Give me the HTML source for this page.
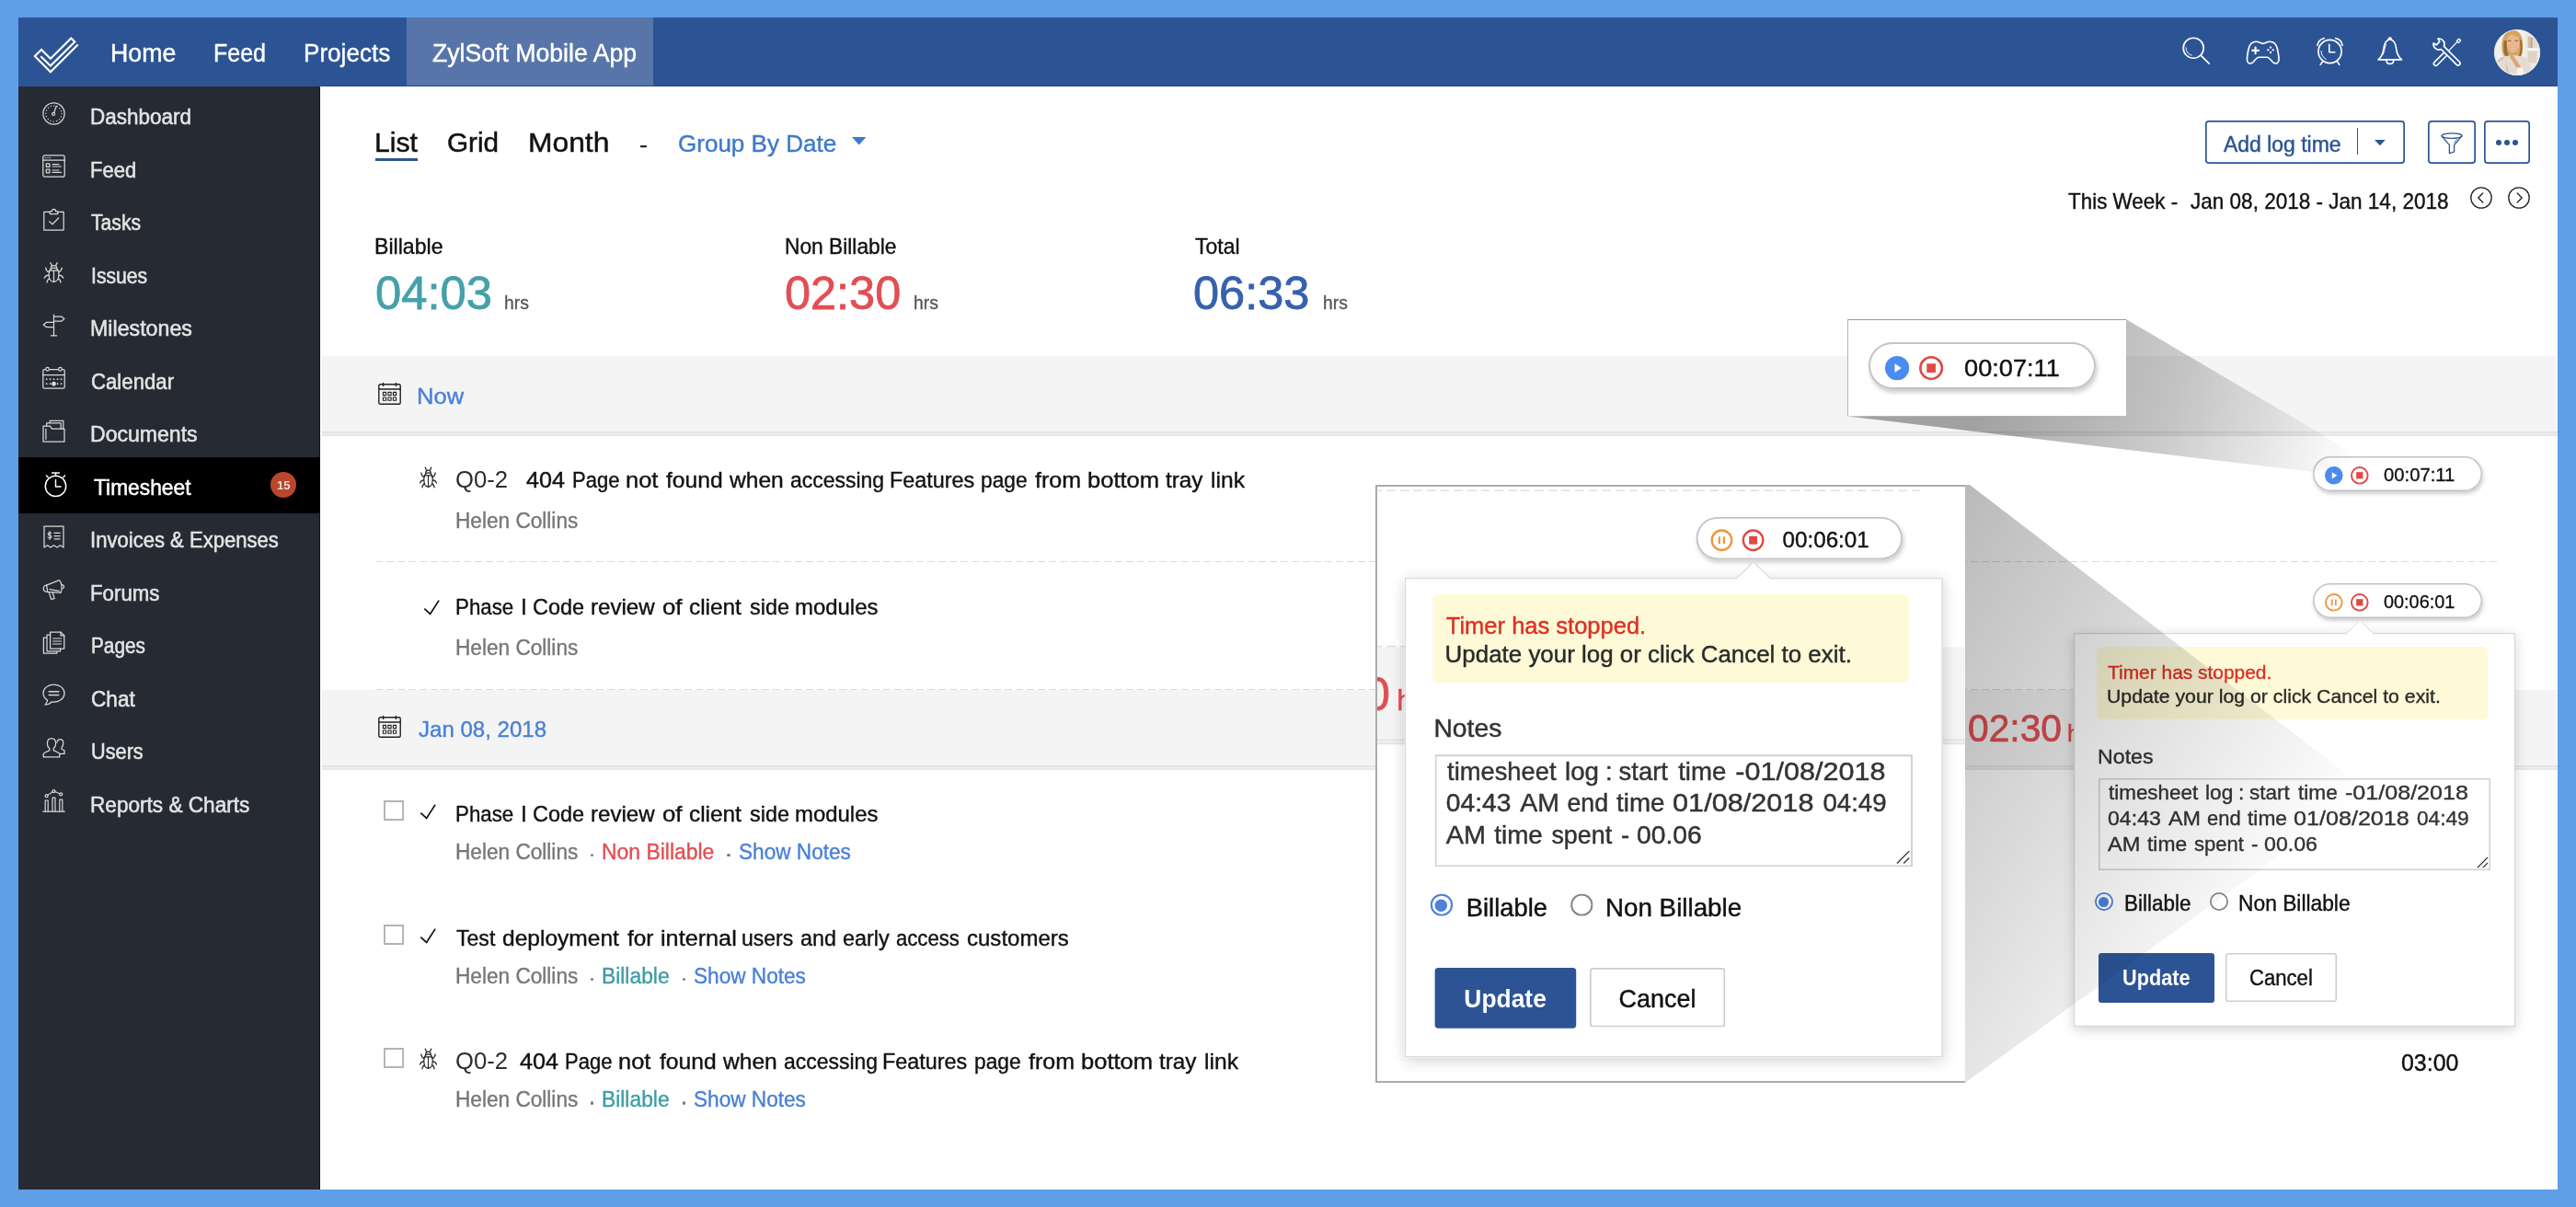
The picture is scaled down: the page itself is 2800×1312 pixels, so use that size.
<!DOCTYPE html><html><head><meta charset="utf-8"><title>Timesheet</title><style>
html,body{margin:0;padding:0}
body{width:2800px;height:1312px;position:relative;overflow:hidden;background:#5E9FE8;font-family:"Liberation Sans", sans-serif;}
.a{position:absolute;box-sizing:border-box}
.t{position:absolute;white-space:pre;line-height:1;transform-origin:0 50%;}
svg.a{overflow:visible}
</style></head><body><div class="a" style="left:20px;top:19px;width:2760px;height:1274px;background:#fff"></div><div class="a" style="left:348.2px;top:94px;width:2431.8px;height:1199px;background:#fff"></div><span class="t" style="left:406.84px;top:140.00px;font-size:29.4px;color:#111;-webkit-text-stroke:0.47px #111;transform:scaleX(1.0263);">List</span><div class="a" style="left:407.5px;top:171.8px;width:46.5px;height:3.2px;background:#2C5494"></div><span class="t" style="left:486.21px;top:140.00px;font-size:29.4px;color:#111;-webkit-text-stroke:0.47px #111;transform:scaleX(1.0112);">Grid</span><span class="t" style="left:574.12px;top:140.00px;font-size:29.4px;color:#111;-webkit-text-stroke:0.47px #111;transform:scaleX(1.0815);">Month</span><span class="t" style="left:695.38px;top:145.00px;font-size:24px;color:#222;-webkit-text-stroke:0.38px #222;transform:scaleX(1.0980);">-</span><span class="t" style="left:737.28px;top:143.00px;font-size:26px;color:#3F7ACD;-webkit-text-stroke:0.42px #3F7ACD;transform:scaleX(1.0012);">Group By Date</span><svg class="a" style="left:925.500px;top:148.800px" width="15.500" height="8.400" viewBox="0 0 15.500 8.400"><path d="M0 0h15.500L7.750 8.400z" fill="#3F7ACD"/></svg><div class="a" style="left:2396.9px;top:130.8px;width:217px;height:47.2px;box-shadow:inset 0 0 0 1.700px #2C5494;border-radius:4px;background:#fff"></div><span class="t" style="left:2417.40px;top:146.00px;font-size:23.5px;color:#2C5494;-webkit-text-stroke:0.45px #2C5494;transform:scaleX(0.9763);">Add log time</span><div class="a" style="left:2561.8px;top:139.2px;width:1.6px;height:29.3px;background:#2C5494"></div><svg class="a" style="left:2581px;top:151.600px" width="11.800" height="6.200" viewBox="0 0 11.800 6.200"><path d="M0 0h11.800L5.900 6.200z" fill="#2C5494"/></svg><div class="a" style="left:2638.9px;top:130.8px;width:52.2px;height:47.2px;box-shadow:inset 0 0 0 1.700px #2C5494;border-radius:4px;background:#fff"></div><svg class="a" style="left:2653.2px;top:143.5px" width="24" height="23.5" viewBox="0 0 24 23.5" fill="none" stroke="#2C5494" stroke-width="1.3" stroke-linecap="round" stroke-linejoin="round" ><ellipse cx="12" cy="3.600" rx="11" ry="2.800"/><path d="M1 3.800l8.400 9.800v9l5.200-1.600v-7.400L23 3.800" /><path d="M17.500 7.600l-3 3.600" stroke-width="0.900"/></svg><div class="a" style="left:2699.6px;top:130.8px;width:50.6px;height:47.2px;box-shadow:inset 0 0 0 1.700px #2C5494;border-radius:4px;background:#fff"></div><div class="a" style="left:2713.3px;top:152.2px;width:5.8px;height:5.8px;border-radius:50%;background:#2C5494"></div><div class="a" style="left:2722.1000000000004px;top:152.2px;width:5.8px;height:5.8px;border-radius:50%;background:#2C5494"></div><div class="a" style="left:2730.9px;top:152.2px;width:5.8px;height:5.8px;border-radius:50%;background:#2C5494"></div><span class="t" style="left:2248.25px;top:208.00px;font-size:23.2px;color:#111;-webkit-text-stroke:0.37px #111;transform:scaleX(0.9670);">This Week -</span><span class="t" style="left:2380.95px;top:208.00px;font-size:23.2px;color:#111;-webkit-text-stroke:0.37px #111;transform:scaleX(0.9714);">Jan 08, 2018 - Jan 14, 2018</span><svg class="a" style="left:2685px;top:203px" width="24" height="24" viewBox="0 0 24 24" fill="none" stroke="#222" stroke-width="1.3" stroke-linecap="round" stroke-linejoin="round" ><circle cx="12" cy="12" r="11.200"/><path d="M13.800 7l-5 5 5 5"/></svg><svg class="a" style="left:2726px;top:203px" width="24" height="24" viewBox="0 0 24 24" fill="none" stroke="#222" stroke-width="1.3" stroke-linecap="round" stroke-linejoin="round" ><circle cx="12" cy="12" r="11.200"/><path d="M10.200 7l5 5-5 5"/></svg><span class="t" style="left:407.39px;top:257.00px;font-size:23.7px;color:#111;-webkit-text-stroke:0.38px #111;transform:scaleX(0.9755);">Billable</span><span class="t" style="left:853.12px;top:257.00px;font-size:23.7px;color:#111;-webkit-text-stroke:0.38px #111;transform:scaleX(0.9607);">Non Billable</span><span class="t" style="left:1298.64px;top:257.00px;font-size:23.7px;color:#111;-webkit-text-stroke:0.38px #111;transform:scaleX(0.9703);">Total</span><span class="t" style="left:407.81px;top:294.00px;font-size:50.7px;color:#45A0AA;-webkit-text-stroke:0.81px #45A0AA;transform:scaleX(1.0013);">04:03</span><span class="t" style="left:853.32px;top:294.00px;font-size:50.7px;color:#E04F54;-webkit-text-stroke:0.81px #E04F54;transform:scaleX(0.9949);">02:30</span><span class="t" style="left:1297.42px;top:294.00px;font-size:50.7px;color:#3561AE;-webkit-text-stroke:0.81px #3561AE;transform:scaleX(0.9957);">06:33</span><span class="t" style="left:548.29px;top:319.00px;font-size:20px;color:#555;-webkit-text-stroke:0.32px #555;transform:scaleX(0.9688);">hrs</span><span class="t" style="left:993.39px;top:319.00px;font-size:20px;color:#555;-webkit-text-stroke:0.32px #555;transform:scaleX(0.9688);">hrs</span><span class="t" style="left:1438.39px;top:319.00px;font-size:20px;color:#555;-webkit-text-stroke:0.32px #555;transform:scaleX(0.9688);">hrs</span><div class="a" style="left:350px;top:387px;width:2430px;height:82px;background:#F4F4F4"></div><div class="a" style="left:350px;top:469px;width:2430px;height:2px;background:#E4E4E4"></div><div class="a" style="left:350px;top:471px;width:2430px;height:1.2px;background:#F1F1F1"></div><div class="a" style="left:350px;top:472.2px;width:2430px;height:1.8px;background:#E7E7E7"></div><svg class="a" style="left:411px;top:415px" width="25" height="25" viewBox="0 0 25 25" fill="none" stroke="#222" stroke-width="1.4" stroke-linecap="round" stroke-linejoin="round" ><rect x="0.800" y="2.800" width="23.400" height="21.400" rx="1.500"/><path d="M0.800 8h23.400M5.600 1.400v3M19.400 1.400v3"/><g stroke-width="1.100"><rect x="5.400" y="11.400" width="3.200" height="3.200"/><rect x="10.900" y="11.400" width="3.200" height="3.200"/><rect x="16.400" y="11.400" width="3.200" height="3.200"/><rect x="5.400" y="17" width="3.200" height="3.200"/><rect x="10.900" y="17" width="3.200" height="3.200"/><rect x="16.400" y="17" width="3.200" height="3.200"/></g></svg><span class="t" style="left:452.91px;top:419.00px;font-size:24.7px;color:#4A80D6;-webkit-text-stroke:0.4px #4A80D6;transform:scaleX(1.0338);">Now</span><svg class="a" style="left:454.7px;top:506.6px" width="21" height="23.6" viewBox="0.500 1.500 24 23.200" fill="none" stroke="#222" stroke-width="1.3" stroke-linecap="round" stroke-linejoin="round" preserveAspectRatio="none"><path d="M12.500 8.200c-3.600 0-5.400 3-5.400 7.400 0 4.600 2.200 7.800 5.400 7.800s5.400-3.200 5.400-7.800c0-4.400-1.800-7.400-5.400-7.400z"/><path d="M12.500 11v12.200M7.600 11.200h9.800"/><path d="M9.200 8.600c0-4 6.600-4 6.600 0"/><path d="M10.200 5.400L8.800 2.600M14.800 5.400l1.400-2.800"/><path d="M7.300 12.800c-2.200-.6-3.200-2.200-3.600-4.600M17.700 12.800c2.200-.6 3.200-2.200 3.600-4.600M7 16.200c-2.400 0-3.800.8-4.800 3M18 16.200c2.400 0 3.800.8 4.800 3M7.800 20.200c-1.800.4-2.600 1.800-2.800 3.800M17.200 20.200c1.800.4 2.600 1.800 2.800 3.800"/></svg><span class="t" style="left:494.70px;top:509.00px;font-size:25px;color:#2e2e2e;transform:scaleX(1.0263);">Q0-2</span><span class="t" style="left:572.01px;top:510.00px;font-size:24.5px;color:#111;-webkit-text-stroke:0.39px #111;transform:scaleX(1.0280);">404</span><span class="t" style="left:621.58px;top:510.00px;font-size:24.5px;color:#111;-webkit-text-stroke:0.39px #111;transform:scaleX(0.8985);">Page</span><span class="t" style="left:679.51px;top:510.00px;font-size:24.5px;color:#111;-webkit-text-stroke:0.39px #111;transform:scaleX(1.0395);">not</span><span class="t" style="left:723.60px;top:510.00px;font-size:24.5px;color:#111;-webkit-text-stroke:0.39px #111;transform:scaleX(1.0061);">found</span><span class="t" style="left:793.28px;top:510.00px;font-size:24.5px;color:#111;-webkit-text-stroke:0.39px #111;transform:scaleX(1.0039);">when</span><span class="t" style="left:858.68px;top:510.00px;font-size:24.5px;color:#111;-webkit-text-stroke:0.39px #111;transform:scaleX(0.9363);">accessing</span><span class="t" style="left:966.57px;top:510.00px;font-size:24.5px;color:#111;-webkit-text-stroke:0.39px #111;transform:scaleX(0.9542);">Features</span><span class="t" style="left:1065.98px;top:510.00px;font-size:24.5px;color:#111;-webkit-text-stroke:0.39px #111;transform:scaleX(0.9273);">page</span><span class="t" style="left:1125.20px;top:510.00px;font-size:24.5px;color:#111;-webkit-text-stroke:0.39px #111;transform:scaleX(1.0224);">from</span><span class="t" style="left:1181.70px;top:510.00px;font-size:24.5px;color:#111;-webkit-text-stroke:0.39px #111;transform:scaleX(1.0430);">bottom</span><span class="t" style="left:1267.10px;top:510.00px;font-size:24.5px;color:#111;-webkit-text-stroke:0.39px #111;transform:scaleX(0.9892);">tray</span><span class="t" style="left:1315.86px;top:510.00px;font-size:24.5px;color:#111;-webkit-text-stroke:0.39px #111;transform:scaleX(1.0052);">link</span><span class="t" style="left:495.23px;top:555.00px;font-size:23.5px;color:#777;-webkit-text-stroke:0.38px #777;transform:scaleX(0.9626);">Helen Collins</span><div class="a" style="left:407.7px;top:609.95px;width:2307.0px;height:1.5px;background:repeating-linear-gradient(90deg,#DADADA 0 8px,transparent 8px 12px)"></div><svg class="a" style="left:461px;top:652.4px" width="18" height="17" viewBox="0 0 18 17" fill="none" stroke="#111" stroke-width="1.7" stroke-linecap="round" stroke-linejoin="round" ><path d="M0.300 9.700L6.600 15.500L16.100 0.600" stroke-linecap="butt" stroke-linejoin="miter"/></svg><span class="t" style="left:494.96px;top:648.00px;font-size:24.5px;color:#111;-webkit-text-stroke:0.39px #111;transform:scaleX(0.9104);">Phase</span><span class="t" style="left:565.69px;top:648.00px;font-size:24.5px;color:#111;-webkit-text-stroke:0.39px #111;transform:scaleX(1.0010);">I</span><span class="t" style="left:578.90px;top:648.00px;font-size:24.5px;color:#111;-webkit-text-stroke:0.39px #111;transform:scaleX(0.9570);">Code</span><span class="t" style="left:642.09px;top:648.00px;font-size:24.5px;color:#111;-webkit-text-stroke:0.39px #111;transform:scaleX(0.9833);">review</span><span class="t" style="left:720.49px;top:648.00px;font-size:24.5px;color:#111;-webkit-text-stroke:0.39px #111;transform:scaleX(1.0531);">of</span><span class="t" style="left:749.44px;top:648.00px;font-size:24.5px;color:#111;-webkit-text-stroke:0.39px #111;transform:scaleX(0.9945);">client</span><span class="t" style="left:815.03px;top:648.00px;font-size:24.5px;color:#111;-webkit-text-stroke:0.39px #111;transform:scaleX(0.9548);">side</span><span class="t" style="left:864.20px;top:648.00px;font-size:24.5px;color:#111;-webkit-text-stroke:0.39px #111;transform:scaleX(0.9767);">modules</span><span class="t" style="left:495.23px;top:693.00px;font-size:23.5px;color:#777;-webkit-text-stroke:0.38px #777;transform:scaleX(0.9626);">Helen Collins</span><div class="a" style="left:407.7px;top:748.55px;width:2307.0px;height:1.5px;background:repeating-linear-gradient(90deg,#DADADA 0 8px,transparent 8px 12px)"></div><div class="a" style="left:350px;top:750px;width:2430px;height:82px;background:#F4F4F4"></div><div class="a" style="left:350px;top:832px;width:2430px;height:2px;background:#E4E4E4"></div><div class="a" style="left:350px;top:834px;width:2430px;height:1.2px;background:#F1F1F1"></div><div class="a" style="left:350px;top:835.2px;width:2430px;height:1.8px;background:#E7E7E7"></div><svg class="a" style="left:411px;top:776.5px" width="25" height="25" viewBox="0 0 25 25" fill="none" stroke="#222" stroke-width="1.4" stroke-linecap="round" stroke-linejoin="round" ><rect x="0.800" y="2.800" width="23.400" height="21.400" rx="1.500"/><path d="M0.800 8h23.400M5.600 1.400v3M19.400 1.400v3"/><g stroke-width="1.100"><rect x="5.400" y="11.400" width="3.200" height="3.200"/><rect x="10.900" y="11.400" width="3.200" height="3.200"/><rect x="16.400" y="11.400" width="3.200" height="3.200"/><rect x="5.400" y="17" width="3.200" height="3.200"/><rect x="10.900" y="17" width="3.200" height="3.200"/><rect x="16.400" y="17" width="3.200" height="3.200"/></g></svg><span class="t" style="left:454.52px;top:781.00px;font-size:24.7px;color:#4A80D6;-webkit-text-stroke:0.4px #4A80D6;transform:scaleX(0.9742);">Jan 08, 2018</span><div class="a" style="left:417.2px;top:870.0999999999999px;width:21.8px;height:21.8px;box-shadow:inset 0 0 0 1.900px #B3B3B3;background:#fff"></div><svg class="a" style="left:456.8px;top:874.4px" width="18" height="17" viewBox="0 0 18 17" fill="none" stroke="#111" stroke-width="1.7" stroke-linecap="round" stroke-linejoin="round" ><path d="M0.300 9.700L6.600 15.500L16.100 0.600" stroke-linecap="butt" stroke-linejoin="miter"/></svg><span class="t" style="left:494.96px;top:873.00px;font-size:24.5px;color:#111;-webkit-text-stroke:0.39px #111;transform:scaleX(0.9104);">Phase</span><span class="t" style="left:565.69px;top:873.00px;font-size:24.5px;color:#111;-webkit-text-stroke:0.39px #111;transform:scaleX(1.0010);">I</span><span class="t" style="left:578.90px;top:873.00px;font-size:24.5px;color:#111;-webkit-text-stroke:0.39px #111;transform:scaleX(0.9570);">Code</span><span class="t" style="left:642.09px;top:873.00px;font-size:24.5px;color:#111;-webkit-text-stroke:0.39px #111;transform:scaleX(0.9833);">review</span><span class="t" style="left:720.49px;top:873.00px;font-size:24.5px;color:#111;-webkit-text-stroke:0.39px #111;transform:scaleX(1.0531);">of</span><span class="t" style="left:749.44px;top:873.00px;font-size:24.5px;color:#111;-webkit-text-stroke:0.39px #111;transform:scaleX(0.9945);">client</span><span class="t" style="left:815.03px;top:873.00px;font-size:24.5px;color:#111;-webkit-text-stroke:0.39px #111;transform:scaleX(0.9548);">side</span><span class="t" style="left:864.20px;top:873.00px;font-size:24.5px;color:#111;-webkit-text-stroke:0.39px #111;transform:scaleX(0.9767);">modules</span><span class="t" style="left:495.23px;top:915.00px;font-size:23.5px;color:#777;-webkit-text-stroke:0.38px #777;transform:scaleX(0.9626);">Helen Collins</span><div class="a" style="left:642.2px;top:928.2px;width:3.3px;height:3.3px;border-radius:50%;background:#7a7a7a"></div><span class="t" style="left:654.01px;top:915.00px;font-size:23.5px;color:#E04F54;-webkit-text-stroke:0.38px #E04F54;transform:scaleX(0.9754);">Non Billable</span><div class="a" style="left:790.4px;top:928.2px;width:3.3px;height:3.3px;border-radius:50%;background:#7a7a7a"></div><span class="t" style="left:803.29px;top:915.00px;font-size:23.5px;color:#4A80D6;-webkit-text-stroke:0.38px #4A80D6;transform:scaleX(0.9622);">Show Notes</span><div class="a" style="left:417.2px;top:1004.8999999999999px;width:21.8px;height:21.8px;box-shadow:inset 0 0 0 1.900px #B3B3B3;background:#fff"></div><svg class="a" style="left:456.8px;top:1009.1999999999999px" width="18" height="17" viewBox="0 0 18 17" fill="none" stroke="#111" stroke-width="1.7" stroke-linecap="round" stroke-linejoin="round" ><path d="M0.300 9.700L6.600 15.500L16.100 0.600" stroke-linecap="butt" stroke-linejoin="miter"/></svg><span class="t" style="left:495.74px;top:1008.00px;font-size:24.5px;color:#111;-webkit-text-stroke:0.39px #111;transform:scaleX(0.9410);">Test</span><span class="t" style="left:545.93px;top:1008.00px;font-size:24.5px;color:#111;-webkit-text-stroke:0.39px #111;transform:scaleX(1.0017);">deployment</span><span class="t" style="left:681.80px;top:1008.00px;font-size:24.5px;color:#111;-webkit-text-stroke:0.39px #111;transform:scaleX(0.9940);">for</span><span class="t" style="left:717.52px;top:1008.00px;font-size:24.5px;color:#111;-webkit-text-stroke:0.39px #111;transform:scaleX(1.0297);">internal</span><span class="t" style="left:806.16px;top:1008.00px;font-size:24.5px;color:#111;-webkit-text-stroke:0.39px #111;transform:scaleX(0.9390);">users</span><span class="t" style="left:869.67px;top:1008.00px;font-size:24.5px;color:#111;-webkit-text-stroke:0.39px #111;transform:scaleX(0.9526);">and</span><span class="t" style="left:915.57px;top:1008.00px;font-size:24.5px;color:#111;-webkit-text-stroke:0.39px #111;transform:scaleX(0.9553);">early</span><span class="t" style="left:974.31px;top:1008.00px;font-size:24.5px;color:#111;-webkit-text-stroke:0.39px #111;transform:scaleX(0.9020);">access</span><span class="t" style="left:1050.65px;top:1008.00px;font-size:24.5px;color:#111;-webkit-text-stroke:0.39px #111;transform:scaleX(0.9805);">customers</span><span class="t" style="left:495.23px;top:1050.00px;font-size:23.5px;color:#777;-webkit-text-stroke:0.38px #777;transform:scaleX(0.9626);">Helen Collins</span><div class="a" style="left:642.2px;top:1063.0px;width:3.3px;height:3.3px;border-radius:50%;background:#7a7a7a"></div><span class="t" style="left:654.02px;top:1050.00px;font-size:23.5px;color:#3F9CA6;-webkit-text-stroke:0.38px #3F9CA6;transform:scaleX(0.9715);">Billable</span><div class="a" style="left:741.5px;top:1063.0px;width:3.3px;height:3.3px;border-radius:50%;background:#7a7a7a"></div><span class="t" style="left:754.49px;top:1050.00px;font-size:23.5px;color:#4A80D6;-webkit-text-stroke:0.38px #4A80D6;transform:scaleX(0.9622);">Show Notes</span><div class="a" style="left:417.2px;top:1139.3px;width:21.8px;height:21.8px;box-shadow:inset 0 0 0 1.900px #B3B3B3;background:#fff"></div><svg class="a" style="left:454.7px;top:1139px" width="21" height="23.6" viewBox="0.500 1.500 24 23.200" fill="none" stroke="#222" stroke-width="1.3" stroke-linecap="round" stroke-linejoin="round" preserveAspectRatio="none"><path d="M12.500 8.200c-3.600 0-5.400 3-5.400 7.400 0 4.600 2.200 7.800 5.400 7.800s5.400-3.200 5.400-7.800c0-4.400-1.800-7.400-5.400-7.400z"/><path d="M12.500 11v12.200M7.600 11.200h9.800"/><path d="M9.200 8.600c0-4 6.600-4 6.600 0"/><path d="M10.200 5.400L8.800 2.600M14.800 5.400l1.400-2.800"/><path d="M7.300 12.800c-2.200-.6-3.200-2.200-3.600-4.600M17.700 12.800c2.200-.6 3.200-2.200 3.600-4.600M7 16.200c-2.400 0-3.800.8-4.800 3M18 16.200c2.400 0 3.800.8 4.800 3M7.800 20.200c-1.800.4-2.600 1.800-2.800 3.800M17.200 20.200c1.800.4 2.600 1.800 2.800 3.800"/></svg><span class="t" style="left:494.70px;top:1141.00px;font-size:25px;color:#2e2e2e;transform:scaleX(1.0263);">Q0-2</span><span class="t" style="left:564.91px;top:1142.00px;font-size:24.5px;color:#111;-webkit-text-stroke:0.39px #111;transform:scaleX(1.0280);">404</span><span class="t" style="left:614.48px;top:1142.00px;font-size:24.5px;color:#111;-webkit-text-stroke:0.39px #111;transform:scaleX(0.8985);">Page</span><span class="t" style="left:672.41px;top:1142.00px;font-size:24.5px;color:#111;-webkit-text-stroke:0.39px #111;transform:scaleX(1.0395);">not</span><span class="t" style="left:716.50px;top:1142.00px;font-size:24.5px;color:#111;-webkit-text-stroke:0.39px #111;transform:scaleX(1.0061);">found</span><span class="t" style="left:786.18px;top:1142.00px;font-size:24.5px;color:#111;-webkit-text-stroke:0.39px #111;transform:scaleX(1.0039);">when</span><span class="t" style="left:851.58px;top:1142.00px;font-size:24.5px;color:#111;-webkit-text-stroke:0.39px #111;transform:scaleX(0.9363);">accessing</span><span class="t" style="left:959.47px;top:1142.00px;font-size:24.5px;color:#111;-webkit-text-stroke:0.39px #111;transform:scaleX(0.9542);">Features</span><span class="t" style="left:1058.88px;top:1142.00px;font-size:24.5px;color:#111;-webkit-text-stroke:0.39px #111;transform:scaleX(0.9273);">page</span><span class="t" style="left:1118.10px;top:1142.00px;font-size:24.5px;color:#111;-webkit-text-stroke:0.39px #111;transform:scaleX(1.0224);">from</span><span class="t" style="left:1174.60px;top:1142.00px;font-size:24.5px;color:#111;-webkit-text-stroke:0.39px #111;transform:scaleX(1.0430);">bottom</span><span class="t" style="left:1260.00px;top:1142.00px;font-size:24.5px;color:#111;-webkit-text-stroke:0.39px #111;transform:scaleX(0.9892);">tray</span><span class="t" style="left:1308.76px;top:1142.00px;font-size:24.5px;color:#111;-webkit-text-stroke:0.39px #111;transform:scaleX(1.0052);">link</span><span class="t" style="left:495.23px;top:1184.00px;font-size:23.5px;color:#777;-webkit-text-stroke:0.38px #777;transform:scaleX(0.9626);">Helen Collins</span><div class="a" style="left:642.2px;top:1197.4px;width:3.3px;height:3.3px;border-radius:50%;background:#7a7a7a"></div><span class="t" style="left:654.02px;top:1184.00px;font-size:23.5px;color:#3F9CA6;-webkit-text-stroke:0.38px #3F9CA6;transform:scaleX(0.9715);">Billable</span><div class="a" style="left:741.5px;top:1197.4px;width:3.3px;height:3.3px;border-radius:50%;background:#7a7a7a"></div><span class="t" style="left:754.49px;top:1184.00px;font-size:23.5px;color:#4A80D6;-webkit-text-stroke:0.38px #4A80D6;transform:scaleX(0.9622);">Show Notes</span><span class="t" style="left:2610.12px;top:1143.00px;font-size:25.6px;color:#111;-webkit-text-stroke:0.41px #111;transform:scaleX(0.9741);">03:00</span><div class="a" style="left:20px;top:94px;width:328.2px;height:1199px;background:#262A33"></div><div class="a" style="left:346.6px;top:94.5px;width:1.6px;height:1198.5px;background:linear-gradient(90deg,#1b1f27,#0e1116)"></div><div class="a" style="left:20px;top:497px;width:328.2px;height:61px;background:#000"></div><svg class="a" style="left:46px;top:110.7px" width="25" height="25" viewBox="0 0 25 25" fill="none" stroke="#d8d8d8" stroke-width="1.25" stroke-linecap="round" stroke-linejoin="round" ><circle cx="12.5" cy="12.5" r="11.6"/><circle cx="12.1" cy="12.900" r="1.500"/><path d="M12.700 11.500L15.300 4.200"/><circle cx="12.500" cy="12.500" r="8.600" stroke-width="1.300" stroke-dasharray="0.100 3.300" stroke-dashoffset="-27.200" pathLength="54"/></svg><span class="t" style="left:98.44px;top:115.00px;font-size:24.5px;color:#E4E4E4;-webkit-text-stroke:0.55px #E4E4E4;transform:scaleX(0.9179);">Dashboard</span><svg class="a" style="left:46px;top:168.20000000000002px" width="25" height="25" viewBox="0 0 25 25" fill="none" stroke="#d8d8d8" stroke-width="1.25" stroke-linecap="round" stroke-linejoin="round" ><rect x="0.8" y="0.8" width="23.4" height="23.4" rx="2"/><path d="M0.8 6.2h23.4"/><path d="M3.6 3.6h.1M6 3.6h.1M8.4 3.6h.1" stroke-width="1.4"/><rect x="4.3" y="9.8" width="3.6" height="3.6"/><rect x="4.3" y="16.2" width="3.6" height="3.6"/><path d="M11 10.6h7M11 13h9.5M11 17h7M11 19.4h9.5" stroke-width="1.1"/></svg><span class="t" style="left:98.48px;top:173.00px;font-size:24.5px;color:#E4E4E4;-webkit-text-stroke:0.55px #E4E4E4;transform:scaleX(0.8981);">Feed</span><svg class="a" style="left:46px;top:225.70000000000002px" width="25" height="25" viewBox="0 0 25 25" fill="none" stroke="#d8d8d8" stroke-width="1.25" stroke-linecap="round" stroke-linejoin="round" ><path d="M8.2 4.3H1.8V24h21.4V4.3h-6.4"/><path d="M8.2 6.6V3.8h2.2c0-3.2 4.2-3.2 4.2 0h2.2v2.8z"/><path d="M7.5 14.6l3.4 3.2 6.8-6.8"/></svg><span class="t" style="left:98.77px;top:230.00px;font-size:24.5px;color:#E4E4E4;-webkit-text-stroke:0.55px #E4E4E4;transform:scaleX(0.8637);">Tasks</span><svg class="a" style="left:46px;top:283.2px" width="25" height="25" viewBox="0 0 25 25" fill="none" stroke="#d8d8d8" stroke-width="1.25" stroke-linecap="round" stroke-linejoin="round" ><path d="M12.500 8.200c-3.600 0-5.400 3-5.400 7.400 0 4.600 2.200 7.800 5.400 7.800s5.400-3.200 5.400-7.800c0-4.400-1.800-7.400-5.400-7.400z"/><path d="M12.500 11v12.200M7.600 11.200h9.800"/><path d="M9.200 8.600c0-4 6.600-4 6.600 0"/><path d="M10.200 5.400L8.800 2.600M14.800 5.400l1.400-2.800"/><path d="M7.300 12.800c-2.200-.6-3.200-2.200-3.600-4.600M17.700 12.800c2.200-.6 3.200-2.200 3.600-4.600M7 16.200c-2.400 0-3.800.8-4.800 3M18 16.200c2.400 0 3.800.8 4.800 3M7.800 20.200c-1.800.4-2.600 1.800-2.800 3.800M17.200 20.200c1.800.4 2.600 1.800 2.800 3.800"/></svg><span class="t" style="left:98.55px;top:288.00px;font-size:24.5px;color:#E4E4E4;-webkit-text-stroke:0.55px #E4E4E4;transform:scaleX(0.8631);">Issues</span><svg class="a" style="left:46px;top:340.7px" width="25" height="25" viewBox="0 0 25 25" fill="none" stroke="#d8d8d8" stroke-width="1.25" stroke-linecap="round" stroke-linejoin="round" ><path d="M12.500 1v22.400M9.400 23.800h6.200"/><path d="M12.500 3h8.200l3.200 2.600-3.200 2.600h-8.200"/><path d="M12.500 9.400H4.400L1.200 12l3.200 2.600h8.100"/></svg><span class="t" style="left:98.39px;top:345.00px;font-size:24.5px;color:#E4E4E4;-webkit-text-stroke:0.55px #E4E4E4;transform:scaleX(0.9473);">Milestones</span><svg class="a" style="left:46px;top:398.2px" width="25" height="25" viewBox="0 0 25 25" fill="none" stroke="#d8d8d8" stroke-width="1.25" stroke-linecap="round" stroke-linejoin="round" ><rect x="0.8" y="3.600" width="23.400" height="20.600" rx="1.500"/><path d="M0.800 9.600h23.400"/><circle cx="5.600" cy="3.200" r="1.800" fill="#262A33"/><circle cx="19.400" cy="3.200" r="1.800" fill="#262A33"/><path d="M4.600 14.200h.1M8.500 14.200h.1M12.500 14.200h.1M16.500 14.200h.1M20.400 14.200h.1M4.600 19.200h.1M8.500 19.200h.1M16.500 19.200h.1M20.400 19.200h.1" stroke-width="1.700"/><circle cx="12.500" cy="19.200" r="1.800" fill="#ddd"/></svg><span class="t" style="left:98.56px;top:403.00px;font-size:24.5px;color:#E4E4E4;-webkit-text-stroke:0.55px #E4E4E4;transform:scaleX(0.9057);">Calendar</span><svg class="a" style="left:46px;top:455.7px" width="25" height="25" viewBox="0 0 25 25" fill="none" stroke="#d8d8d8" stroke-width="1.25" stroke-linecap="round" stroke-linejoin="round" ><path d="M1 7.200h7.400l2 3H24v14H1z"/><path d="M3.900 10.400v11"/><path d="M4.600 7V3.800h15.600v6.200M8.200 3.600V1.400h14.600v8.800"/></svg><span class="t" style="left:98.40px;top:460.00px;font-size:24.5px;color:#E4E4E4;-webkit-text-stroke:0.55px #E4E4E4;transform:scaleX(0.9412);">Documents</span><svg class="a" style="left:48px;top:512.4px" width="25" height="27" viewBox="0 -1 25 27" fill="none" stroke="#fff" stroke-width="1.5" stroke-linecap="round" stroke-linejoin="round" ><circle cx="12.500" cy="15.400" r="11.200"/><path d="M12.500 4V1.200M8.600 1h7.800M20.800 5.800l1.800-1.800M4.200 5.800L2.400 4"/><path d="M12.500 8.600v7.400h5.600"/></svg><span class="t" style="left:101.64px;top:518.00px;font-size:24.5px;color:#fff;-webkit-text-stroke:0.55px #fff;transform:scaleX(0.9296);">Timesheet</span><svg class="a" style="left:46px;top:570.6999999999999px" width="25" height="25" viewBox="0 0 25 25" fill="none" stroke="#d8d8d8" stroke-width="1.25" stroke-linecap="round" stroke-linejoin="round" ><path d="M2 1h21v23l-3.5-2.2L16 24l-3.5-2.2L9 24l-3.5-2.2L2 24z"/><path d="M13 8.4h6.2M13 11.6h6.2M13 14.8h6.2" stroke-width="1.2"/><path d="M9.6 8.6c-1-1.2-3.4-.8-3.4.8 0 2 3.6 1 3.6 3 0 1.800-2.800 2-3.800.600M8 6.600v8.800" stroke-width="1.1"/></svg><span class="t" style="left:98.48px;top:575.00px;font-size:24.5px;color:#E4E4E4;-webkit-text-stroke:0.55px #E4E4E4;transform:scaleX(0.9010);">Invoices &amp; Expenses</span><svg class="a" style="left:46px;top:628.1999999999999px" width="25" height="25" viewBox="0 0 25 25" fill="none" stroke="#d8d8d8" stroke-width="1.25" stroke-linecap="round" stroke-linejoin="round" ><path d="M4.600 8.200L18.400 2.600c2.800 2.400 3.600 9 1.600 13.800L5.800 15.400z"/><path d="M4.600 8.200C2.200 8.400 1 9.800 1.200 12c.2 2.200 1.800 3.400 4.600 3.400"/><path d="M7.200 15.600l2.400 7.800 3.600-.8-2-6.400M21.600 7.600c2.200.2 2.800 3.200.6 4.200M7.800 12.600l10.400 1.800" /></svg><span class="t" style="left:98.46px;top:633.00px;font-size:24.5px;color:#E4E4E4;-webkit-text-stroke:0.55px #E4E4E4;transform:scaleX(0.9085);">Forums</span><svg class="a" style="left:46px;top:685.6999999999999px" width="25" height="25" viewBox="0 0 25 25" fill="none" stroke="#d8d8d8" stroke-width="1.25" stroke-linecap="round" stroke-linejoin="round" ><path d="M8.600 1.200H20l3.800 3.600V19H8.600z"/><path d="M20 1.200v3.600h3.800"/><path d="M8.600 4.200H5V21.800h14.600V19M5 7.200H1.400V24.200h14.400V21.800"/><path d="M11.600 8h9M11.600 11h9M11.600 14h9" stroke-width="1.2"/></svg><span class="t" style="left:98.58px;top:690.00px;font-size:24.5px;color:#E4E4E4;-webkit-text-stroke:0.55px #E4E4E4;transform:scaleX(0.8489);">Pages</span><svg class="a" style="left:46px;top:743.1999999999999px" width="25" height="25" viewBox="0 0 25 25" fill="none" stroke="#d8d8d8" stroke-width="1.25" stroke-linecap="round" stroke-linejoin="round" ><path d="M12.500 1.200C5.800 1.200 1 5.200 1 10.600c0 3.200 1.800 5.800 4.600 7.400-.2 2-1.200 3.800-2.600 5 3.200-.2 5.600-1.400 7.200-3.200.8.100 1.500.200 2.300.200 6.700 0 11.500-4 11.500-9.400S19.200 1.200 12.500 1.200z"/><path d="M7.200 8.800h10.600M7.200 12.400h10.600" stroke-width="1.5"/></svg><span class="t" style="left:98.54px;top:748.00px;font-size:24.5px;color:#E4E4E4;-webkit-text-stroke:0.55px #E4E4E4;transform:scaleX(0.9233);">Chat</span><svg class="a" style="left:46px;top:800.6999999999999px" width="25" height="25" viewBox="0 0 25 25" fill="none" stroke="#d8d8d8" stroke-width="1.25" stroke-linecap="round" stroke-linejoin="round" ><path d="M15.800 6.200c.6-2.400 2-3.600 3.600-3.600 2.200 0 3.400 1.800 3.400 4.400 0 2-.8 3.600-1.800 4.400v1.800l3 1.600v3.600H19" /><path d="M10 1.600c3 0 4.600 2.400 4.600 5.600 0 2.400-1 4.400-2.400 5.400v2l5.400 2.600c.8.400 1.200 1 1.200 1.800v2.800H1.200V19c0-.8.400-1.400 1.200-1.800l5.400-2.600v-2C6.400 11.600 5.400 9.600 5.400 7.200c0-3.200 1.600-5.600 4.600-5.600z"/></svg><span class="t" style="left:98.84px;top:805.00px;font-size:24.5px;color:#E4E4E4;-webkit-text-stroke:0.55px #E4E4E4;transform:scaleX(0.8868);">Users</span><svg class="a" style="left:46px;top:858.1999999999999px" width="25" height="25" viewBox="0 0 25 25" fill="none" stroke="#d8d8d8" stroke-width="1.25" stroke-linecap="round" stroke-linejoin="round" ><path d="M0.800 24.200h23.400"/><path d="M3.200 24V12h3V24M11 24V9.200h3V24M18.800 24V11.200h3V24" stroke-width="1.200"/><circle cx="4.600" cy="7.200" r="1.500"/><circle cx="12.500" cy="2" r="1.500"/><circle cx="20.200" cy="5.400" r="1.500"/><path d="M5.800 6.400l5.400-3.600M13.900 2.600l4.900 2.200" stroke-width="1.100"/></svg><span class="t" style="left:98.43px;top:863.00px;font-size:24.5px;color:#E4E4E4;-webkit-text-stroke:0.55px #E4E4E4;transform:scaleX(0.9227);">Reports &amp; Charts</span><div class="a" style="left:294px;top:513px;width:28px;height:28px;border-radius:50%;background:#BA462B"></div><span class="t" style="left:301.22px;top:521.00px;font-size:13.5px;color:#E6DEDA;font-weight:bold;transform:scaleX(0.9652);">15</span><div class="a" style="left:20px;top:19px;width:2760px;height:75px;background:#2C5494"></div><div class="a" style="left:442px;top:19px;width:268px;height:75px;background:#5775A8"></div><div class="a" style="left:348.5px;top:93.1px;width:2431.5px;height:1px;background:#22488B"></div><svg class="a" style="left:36px;top:40px" width="50" height="40" viewBox="0 0 50 40" fill="none" stroke="#fff" stroke-width="2.1" stroke-linecap="round" stroke-linejoin="round" ><path d="M48.700 8.600L18.900 38.200L1.800 21L9 14L18.900 23.800L41.300 1.600L45.300 5.600L18.900 31.600L8.300 21.200" stroke-linejoin="miter" stroke-linecap="butt"/></svg><span class="t" style="left:119.51px;top:45.00px;font-size:27px;color:#fff;-webkit-text-stroke:0.43px #fff;transform:scaleX(0.9896);">Home</span><span class="t" style="left:232.15px;top:45.00px;font-size:27px;color:#fff;-webkit-text-stroke:0.43px #fff;transform:scaleX(0.9255);">Feed</span><span class="t" style="left:330.26px;top:45.00px;font-size:27px;color:#fff;-webkit-text-stroke:0.43px #fff;transform:scaleX(0.9664);">Projects</span><span class="t" style="left:470.27px;top:45.00px;font-size:27px;color:#fff;-webkit-text-stroke:0.43px #fff;transform:scaleX(0.9864);">ZylSoft Mobile App</span><svg class="a" style="left:2372px;top:40px" width="30" height="30" viewBox="0 0 30 30" fill="none" stroke="#fff" stroke-width="1.65" stroke-linecap="round" stroke-linejoin="round" ><circle cx="12.2" cy="12.2" r="11"/><path d="M20.200 20.200l9 9"/><path d="M4 11.800C4.200 16 6.600 19 10.400 20.100" stroke-width="1"/></svg><svg class="a" style="left:2441px;top:43.5px" width="37" height="26" viewBox="0 0 37 26" fill="none" stroke="#fff" stroke-width="1.65" stroke-linecap="round" stroke-linejoin="round" ><path d="M11.500 1.200C14.500 1.200 16 3.400 18.750 3.400S23 1.200 26 1.200C30.800 1.200 33.300 4 34.400 9C35.600 14.500 36.300 19 35.900 22C35.500 25.200 32 25.800 30 24C27.500 21.800 26 18.500 23.500 18.200H14C11.500 18.500 10 21.800 7.500 24C5.500 25.800 2 25.200 1.600 22C1.200 19 1.900 14.500 3.100 9C4.200 4 6.700 1.200 11.500 1.200Z"/><path d="M10.600 7.500v6.800M7.200 10.900h6.800" stroke-width="2.100"/><path d="M27 7.600h.1M27 13h.1M24.300 10.300h.1M29.700 10.300h.1" stroke-width="2.300"/></svg><svg class="a" style="left:2517.5px;top:39.5px" width="29" height="31" viewBox="0 0 29 31" fill="none" stroke="#fff" stroke-width="1.65" stroke-linecap="round" stroke-linejoin="round" ><circle cx="14.500" cy="16" r="12.600"/><path d="M13.800 8.400v8.400h6.100" stroke-width="1.600"/><path d="M5 15.500c0 3.800 2 7 5.300 8.900" stroke-width="1"/><path d="M0.900 9.300C1.600 5.600 4.400 2.600 8.300 1.500M28.100 9.300c-.7-3.700-3.500-6.700-7.400-7.800M6.300 27.200L4.200 30.400M22.700 27.200l2.100 3.200"/></svg><svg class="a" style="left:2583.8px;top:39.5px" width="28" height="31" viewBox="0 0 28 31" fill="none" stroke="#fff" stroke-width="1.65" stroke-linecap="round" stroke-linejoin="round" ><path d="M13.800 2.700C9 3.500 7.500 8 7 12.500C6.500 17.500 5 21.800 1 24.800H26.600C22.600 21.800 21.100 17.500 20.600 12.500C20.100 8 18.600 3.500 13.800 2.700Z"/><path d="M12.300 3c0-2.600 3-2.600 3 0M9.800 25.200c0 5.600 8 5.600 8 0"/><path d="M6 19.500C8 16 8.300 11 9.500 8" stroke-width="0.900"/></svg><svg class="a" style="left:2644.4px;top:40.5px" width="31" height="30" viewBox="0 0 31 30" fill="none" stroke="#fff" stroke-width="1.65" stroke-linecap="round" stroke-linejoin="round" ><path d="M28.800 1.200l1.800 1.800-2.200 2.600-2.200-2.200zM26.800 4.600L17.200 14.600" stroke-width="1.300"/><path d="M14.040 14.640L17.160 17.760L5.160 29.760A2.200 2.200 0 0 1 2.040 26.640Z"/><path d="M12.500 9.400L29.360 26.240A2.200 2.200 0 0 1 26.240 29.360L9.400 12.500" fill="#2C5494"/><path d="M12.520 9.340A6 6 0 0 0 5.960 1.090L7.800 4.200L4.200 7.800L1.090 5.960A6 6 0 0 0 9.340 12.520" fill="#2C5494"/></svg><svg class="a" style="left:2710.700px;top:31.700px" width="50" height="50" viewBox="0 0 50 50"><defs><clipPath id="av"><circle cx="25" cy="25" r="24.800"/></clipPath><filter id="avb" x="-10%" y="-10%" width="120%" height="120%"><feGaussianBlur stdDeviation="0.700"/></filter></defs><g clip-path="url(#av)"><rect width="50" height="50" fill="#F3F0EC"/><g filter="url(#avb)"><rect x="33" y="4" width="17" height="46" fill="#EEE9E3"/><rect x="36.500" y="7.500" width="3" height="12.500" fill="#D8BFA6"/><rect x="39.500" y="8.500" width="2.200" height="11.500" fill="#B9A48C"/><rect x="42" y="8" width="5" height="12" fill="#E3D8CC"/><rect x="36.500" y="23.500" width="10" height="13" fill="#DDD3C8"/><rect x="36" y="21" width="14" height="1.600" fill="#FAF9F7"/><path d="M8.500 22C7 8 13 0.800 20.500 1C28 0.800 32 8 31 20c0 5-1 9-3.500 10.500L12.500 30.500C10 29 9 26 8.500 22z" fill="#D4A460"/><path d="M11 12c-1.500 6-1 13 2 18l3-1c-2-5-3-11-1.500-17zM27.500 11c1.500 5 1.500 13-1 18l2 1.500c2.500-4 3-13 1-19z" fill="#9C6B38"/><path d="M0 50C0 38 3 31 12 29l8-1 10 1c8 2 10 8 11 21z" fill="#E4DCD2"/><path d="M12.500 32l4 18h-3zM2 36c2-4 6-6 10-7l-3 4z" fill="#CFC5B8"/><path d="M18.500 24.500L29.500 41.500L25 42.500L17 30z" fill="#DDA577"/><path d="M25 41.500h6l1.500 8.500h-8z" fill="#F6F4F2"/><ellipse cx="20.600" cy="15" rx="7" ry="10.200" fill="#E9B88F"/><path d="M14 9c2-5 11-5.500 13.500 0-3-.8-7-2-9-3.500-1 1.500-3 2.800-4.500 3.500z" fill="#D9A862"/><path d="M16.500 19.500c2.500 2.800 6 2.800 8.500 0-2.500 1-6 1-8.500 0z" fill="#F7EDEA" stroke="#C98A78" stroke-width="0.500"/><path d="M15 12.300h3.500M22.500 12.300H26" stroke="#7A5A48" stroke-width="1.100"/></g></g><circle cx="25" cy="25" r="24.600" fill="none" stroke="#F3EFEA" stroke-width="0.800"/></svg><div class="a" style="left:2513.8px;top:495.5px;width:184.3px;height:38.2px;border-radius:19.1px;background:#fff;box-shadow:inset 0 0 0 1.50px #C3C3C3,1.2px 2.8px 4.0px rgba(0,0,0,.2)"></div><svg class="a" style="left:2527.1px;top:506.59999999999997px" width="19.6" height="19.6" viewBox="0 0 20 20"><circle cx="10" cy="10" r="10" fill="#4A8BF0"/><path d="M8 6.300L13.600 10 8 13.700z" fill="#fff"/></svg><svg class="a" style="left:2555.0px;top:506.59999999999997px" width="19.6" height="19.6" viewBox="0 0 20 20"><circle cx="10" cy="10" r="9" fill="#fff" stroke="#DE4A43" stroke-width="1.950"/><rect x="6.300" y="6.300" width="7.400" height="7.400" fill="#DE4A43"/></svg><span class="t" style="left:2591.37px;top:507.00px;font-size:19.9px;color:#111;-webkit-text-stroke:0.32px #111;transform:scaleX(1.0180);">00:07:11</span><div class="a" style="left:2130px;top:600px;width:650px;height:540px;background:#fff"></div><div class="a" style="left:2130px;top:609.95px;width:584.6999999999998px;height:1.5px;background:repeating-linear-gradient(90deg,#DADADA 0 8px,transparent 8px 12px)"></div><div class="a" style="left:2130px;top:750px;width:650px;height:82px;background:#F4F4F4"></div><div class="a" style="left:2130px;top:832px;width:650px;height:2px;background:#E4E4E4"></div><div class="a" style="left:2130px;top:834px;width:650px;height:1.2px;background:#F1F1F1"></div><div class="a" style="left:2130px;top:835.2px;width:650px;height:1.8px;background:#E7E7E7"></div><div class="a" style="left:2130px;top:748.55px;width:584.6999999999998px;height:1.5px;background:repeating-linear-gradient(90deg,#DADADA 0 8px,transparent 8px 12px)"></div><span class="t" style="left:2138.93px;top:771.00px;font-size:41.7px;color:#E04F54;-webkit-text-stroke:0.67px #E04F54;transform:scaleX(0.9774);">02:30</span><span class="t" style="left:2246.70px;top:784.00px;font-size:26px;color:#E04F54;-webkit-text-stroke:0.42px #E04F54;transform:scaleX(0.9828);">hrs</span><div class="a" style="left:2513.8px;top:633.5px;width:184.3px;height:38.2px;border-radius:19.1px;background:#fff;box-shadow:inset 0 0 0 1.50px #C3C3C3,1.2px 2.8px 4.0px rgba(0,0,0,.2)"></div><svg class="a" style="left:2527.1px;top:644.6px" width="19.6" height="19.6" viewBox="0 0 20 20"><circle cx="10" cy="10" r="9" fill="#fff" stroke="#F0963A" stroke-width="1.950"/><path d="M7.900 6.600v6.800M12.100 6.600v6.800" stroke="#F0963A" stroke-width="1.800"/></svg><svg class="a" style="left:2555.0px;top:644.6px" width="19.6" height="19.6" viewBox="0 0 20 20"><circle cx="10" cy="10" r="9" fill="#fff" stroke="#DE4A43" stroke-width="1.950"/><rect x="6.300" y="6.300" width="7.400" height="7.400" fill="#DE4A43"/></svg><span class="t" style="left:2591.38px;top:645.00px;font-size:19.9px;color:#111;-webkit-text-stroke:0.32px #111;transform:scaleX(0.9982);">00:06:01</span><div class="a" style="left:2254.4px;top:688.2px;width:479.4px;height:428px;background:#fff;box-shadow:inset 0 0 0 1.200px #DADADA,0 3px 12px rgba(0,0,0,.18)"></div><svg class="a" style="left:2549.8px;top:673.2px" width="30" height="17" viewBox="0 0 30 17"><path d="M0 16L15 1L30 16" fill="#fff" stroke="#D9D9D9" stroke-width="1"/><rect x="1" y="15.200" width="28" height="2" fill="#fff" stroke="none"/></svg><div class="a" style="left:2279.1000000000004px;top:702.6px;width:425px;height:79.8px;background:#FEF9D7;border-radius:6px"></div><span class="t" style="left:2291.07px;top:720.00px;font-size:21px;color:#DC3023;-webkit-text-stroke:0.34px #DC3023;transform:scaleX(0.9963);">Timer has stopped.</span><span class="t" style="left:2290.07px;top:746.00px;font-size:21px;color:#2a2a2a;-webkit-text-stroke:0.34px #2a2a2a;transform:scaleX(1.0126);">Update your log or click Cancel to exit.</span><span class="t" style="left:2280.09px;top:812.00px;font-size:22.4px;color:#333;-webkit-text-stroke:0.36px #333;transform:scaleX(1.0363);">Notes</span><div class="a" style="left:2280.6000000000004px;top:845.7px;width:426.4px;height:100.8px;background:#fff;box-shadow:inset 0 0 0 1.500px #D0D0D0"></div><span class="t" style="left:2292.00px;top:851.00px;font-size:22.5px;color:#333;-webkit-text-stroke:0.36px #333;transform:scaleX(0.9967);">timesheet</span><span class="t" style="left:2396.68px;top:851.00px;font-size:22.5px;color:#333;-webkit-text-stroke:0.36px #333;transform:scaleX(1.0089);">log</span><span class="t" style="left:2432.64px;top:851.00px;font-size:22.5px;color:#333;-webkit-text-stroke:0.36px #333;transform:scaleX(1.0010);">:</span><span class="t" style="left:2445.25px;top:851.00px;font-size:22.5px;color:#333;-webkit-text-stroke:0.36px #333;transform:scaleX(1.0010);">start</span><span class="t" style="left:2497.80px;top:851.00px;font-size:22.5px;color:#333;-webkit-text-stroke:0.36px #333;transform:scaleX(1.0074);">time</span><span class="t" style="left:2548.72px;top:851.00px;font-size:22.5px;color:#333;-webkit-text-stroke:0.36px #333;transform:scaleX(1.1149);">-01/08/2018</span><span class="t" style="left:2290.58px;top:879.00px;font-size:22.5px;color:#333;-webkit-text-stroke:0.36px #333;transform:scaleX(1.0276);">04:43</span><span class="t" style="left:2356.60px;top:879.00px;font-size:22.5px;color:#333;-webkit-text-stroke:0.36px #333;transform:scaleX(1.0393);">AM</span><span class="t" style="left:2398.61px;top:879.00px;font-size:22.5px;color:#333;-webkit-text-stroke:0.36px #333;transform:scaleX(0.9754);">end</span><span class="t" style="left:2443.20px;top:879.00px;font-size:22.5px;color:#333;-webkit-text-stroke:0.36px #333;transform:scaleX(1.0122);">time</span><span class="t" style="left:2493.41px;top:879.00px;font-size:22.5px;color:#333;-webkit-text-stroke:0.36px #333;transform:scaleX(1.1172);">01/08/2018</span><span class="t" style="left:2626.59px;top:879.00px;font-size:22.5px;color:#333;-webkit-text-stroke:0.36px #333;transform:scaleX(1.0075);">04:49</span><span class="t" style="left:2291.30px;top:907.00px;font-size:22.5px;color:#333;-webkit-text-stroke:0.36px #333;transform:scaleX(1.0517);">AM</span><span class="t" style="left:2334.40px;top:907.00px;font-size:22.5px;color:#333;-webkit-text-stroke:0.36px #333;transform:scaleX(1.0146);">time</span><span class="t" style="left:2384.96px;top:907.00px;font-size:22.5px;color:#333;-webkit-text-stroke:0.36px #333;transform:scaleX(0.9805);">spent</span><span class="t" style="left:2447.20px;top:907.00px;font-size:22.5px;color:#333;-webkit-text-stroke:0.36px #333;transform:scaleX(1.0010);">-</span><span class="t" style="left:2460.68px;top:907.00px;font-size:22.5px;color:#333;-webkit-text-stroke:0.36px #333;transform:scaleX(1.0294);">00.06</span><svg class="a" style="left:2691.8px;top:931.2px" width="13" height="13" viewBox="0 0 13 13" stroke="#333" stroke-width="1.100"><path d="M1 12L12 1M7 12l5-5"/></svg><div class="a" style="left:2276.9px;top:970.0px;width:20px;height:20px;border-radius:50%;box-shadow:inset 0 0 0 1.800px #4C82DA;background:#fff"></div><div class="a" style="left:2281.4px;top:974.5px;width:11px;height:11px;border-radius:50%;background:#4C82DA"></div><span class="t" style="left:2308.65px;top:971.00px;font-size:23px;color:#111;-webkit-text-stroke:0.37px #111;transform:scaleX(0.9758);">Billable</span><div class="a" style="left:2401.7000000000003px;top:970.0px;width:20px;height:20px;border-radius:50%;box-shadow:inset 0 0 0 1.700px #858585;background:#fff"></div><span class="t" style="left:2433.22px;top:971.00px;font-size:23px;color:#111;-webkit-text-stroke:0.37px #111;transform:scaleX(0.9908);">Non Billable</span><div class="a" style="left:2281.0px;top:1036.0px;width:125.9px;height:53.6px;background:#2C5494;border-radius:3px"></div><span class="t" style="left:2306.88px;top:1052.00px;font-size:23px;color:#fff;font-weight:bold;transform:scaleX(0.9423);">Update</span><div class="a" style="left:2418.8px;top:1035.7px;width:120.8px;height:53.5px;background:#fff;box-shadow:inset 0 0 0 1.500px #CDCDCD;border-radius:3px"></div><span class="t" style="left:2444.76px;top:1052.00px;font-size:23px;color:#111;-webkit-text-stroke:0.37px #111;transform:scaleX(0.9609);">Cancel</span><svg class="a" style="left:0;top:0" width="2800" height="1312" viewBox="0 0 2800 1312"><defs><linearGradient id="g1" gradientUnits="userSpaceOnUse" x1="2160" y1="400" x2="2560" y2="505"><stop offset="0" stop-color="#000" stop-opacity=".34"/><stop offset=".5" stop-color="#000" stop-opacity=".2"/><stop offset="1" stop-color="#000" stop-opacity="0"/></linearGradient><linearGradient id="g2" gradientUnits="userSpaceOnUse" x1="2137" y1="528" x2="2597.600" y2="813.300"><stop offset="0" stop-color="#000" stop-opacity=".272"/><stop offset="1" stop-color="#000" stop-opacity="0"/></linearGradient></defs><path d="M2311 347L2566 497L2515 513L2007.800 452.400L2311 452z" fill="url(#g1)"/><path d="M2136 527.100L2141 527.100L2575 860L2136 1177z" fill="url(#g2)"/></svg><div class="a" style="left:2007.8px;top:347px;width:303.7px;height:105.4px;background:#fff;border-top:1.500px solid #9A9A9A;border-left:1.500px solid #B5B5B5"></div><div class="a" style="left:2031.05px;top:372.3px;width:246.7777px;height:51.1498px;border-radius:25.5749px;background:#fff;box-shadow:inset 0 0 0 2.01px #C3C3C3,1.6px 3.7px 5.4px rgba(0,0,0,.2)"></div><svg class="a" style="left:2048.8587px;top:387.1629px" width="26.244400000000002" height="26.244400000000002" viewBox="0 0 20 20"><circle cx="10" cy="10" r="10" fill="#4A8BF0"/><path d="M8 6.300L13.600 10 8 13.700z" fill="#fff"/></svg><svg class="a" style="left:2086.2168px;top:387.1629px" width="26.244400000000002" height="26.244400000000002" viewBox="0 0 20 20"><circle cx="10" cy="10" r="9" fill="#fff" stroke="#DE4A43" stroke-width="1.950"/><rect x="6.300" y="6.300" width="7.400" height="7.400" fill="#DE4A43"/></svg><span class="t" style="left:2134.71px;top:387.00px;font-size:26.65px;color:#111;-webkit-text-stroke:0.43px #111;transform:scaleX(1.0209);">00:07:11</span><div class="a" style="left:1495.100px;top:527.100px;width:641.100px;height:649.800px;overflow:hidden;background:#fff;border-top:2px solid #ABABAB;border-left:2px solid #ABABAB;border-bottom:2px solid #ABABAB"><div class="a" style="left:-0.700px;top:-0.900px;width:0;height:0;transform-origin:0 0;transform:scale(1.219) translate(-2228.800px,-606.200px)"><div class="a" style="left:2130px;top:600px;width:650px;height:540px;background:#fff"></div><div class="a" style="left:2130px;top:609.95px;width:584.6999999999998px;height:1.5px;background:repeating-linear-gradient(90deg,#DADADA 0 8px,transparent 8px 12px)"></div><div class="a" style="left:2130px;top:750px;width:650px;height:82px;background:#F4F4F4"></div><div class="a" style="left:2130px;top:832px;width:650px;height:2px;background:#E4E4E4"></div><div class="a" style="left:2130px;top:834px;width:650px;height:1.2px;background:#F1F1F1"></div><div class="a" style="left:2130px;top:835.2px;width:650px;height:1.8px;background:#E7E7E7"></div><div class="a" style="left:2130px;top:748.55px;width:584.6999999999998px;height:1.5px;background:repeating-linear-gradient(90deg,#DADADA 0 8px,transparent 8px 12px)"></div><span class="t" style="left:2138.93px;top:771.00px;font-size:41.7px;color:#E04F54;-webkit-text-stroke:0.67px #E04F54;transform:scaleX(0.9774);">02:30</span><span class="t" style="left:2246.70px;top:784.00px;font-size:26px;color:#E04F54;-webkit-text-stroke:0.42px #E04F54;transform:scaleX(0.9828);">hrs</span><div class="a" style="left:2513.8px;top:633.5px;width:184.3px;height:38.2px;border-radius:19.1px;background:#fff;box-shadow:inset 0 0 0 1.50px #C3C3C3,1.2px 2.8px 4.0px rgba(0,0,0,.2)"></div><svg class="a" style="left:2527.1px;top:644.6px" width="19.6" height="19.6" viewBox="0 0 20 20"><circle cx="10" cy="10" r="9" fill="#fff" stroke="#F0963A" stroke-width="1.950"/><path d="M7.900 6.600v6.800M12.100 6.600v6.800" stroke="#F0963A" stroke-width="1.800"/></svg><svg class="a" style="left:2555.0px;top:644.6px" width="19.6" height="19.6" viewBox="0 0 20 20"><circle cx="10" cy="10" r="9" fill="#fff" stroke="#DE4A43" stroke-width="1.950"/><rect x="6.300" y="6.300" width="7.400" height="7.400" fill="#DE4A43"/></svg><span class="t" style="left:2591.38px;top:645.00px;font-size:19.9px;color:#111;-webkit-text-stroke:0.32px #111;transform:scaleX(0.9982);">00:06:01</span><div class="a" style="left:2254.4px;top:688.2px;width:479.4px;height:428px;background:#fff;box-shadow:inset 0 0 0 1.200px #DADADA,0 3px 12px rgba(0,0,0,.18)"></div><svg class="a" style="left:2549.8px;top:673.2px" width="30" height="17" viewBox="0 0 30 17"><path d="M0 16L15 1L30 16" fill="#fff" stroke="#D9D9D9" stroke-width="1"/><rect x="1" y="15.200" width="28" height="2" fill="#fff" stroke="none"/></svg><div class="a" style="left:2279.1000000000004px;top:702.6px;width:425px;height:79.8px;background:#FEF9D7;border-radius:6px"></div><span class="t" style="left:2291.07px;top:720.00px;font-size:21px;color:#DC3023;-webkit-text-stroke:0.34px #DC3023;transform:scaleX(0.9963);">Timer has stopped.</span><span class="t" style="left:2290.07px;top:746.00px;font-size:21px;color:#2a2a2a;-webkit-text-stroke:0.34px #2a2a2a;transform:scaleX(1.0126);">Update your log or click Cancel to exit.</span><span class="t" style="left:2280.09px;top:812.00px;font-size:22.4px;color:#333;-webkit-text-stroke:0.36px #333;transform:scaleX(1.0363);">Notes</span><div class="a" style="left:2280.6000000000004px;top:845.7px;width:426.4px;height:100.8px;background:#fff;box-shadow:inset 0 0 0 1.500px #D0D0D0"></div><span class="t" style="left:2292.00px;top:851.00px;font-size:22.5px;color:#333;-webkit-text-stroke:0.36px #333;transform:scaleX(0.9967);">timesheet</span><span class="t" style="left:2396.68px;top:851.00px;font-size:22.5px;color:#333;-webkit-text-stroke:0.36px #333;transform:scaleX(1.0089);">log</span><span class="t" style="left:2432.64px;top:851.00px;font-size:22.5px;color:#333;-webkit-text-stroke:0.36px #333;transform:scaleX(1.0010);">:</span><span class="t" style="left:2445.25px;top:851.00px;font-size:22.5px;color:#333;-webkit-text-stroke:0.36px #333;transform:scaleX(1.0010);">start</span><span class="t" style="left:2497.80px;top:851.00px;font-size:22.5px;color:#333;-webkit-text-stroke:0.36px #333;transform:scaleX(1.0074);">time</span><span class="t" style="left:2548.72px;top:851.00px;font-size:22.5px;color:#333;-webkit-text-stroke:0.36px #333;transform:scaleX(1.1149);">-01/08/2018</span><span class="t" style="left:2290.58px;top:879.00px;font-size:22.5px;color:#333;-webkit-text-stroke:0.36px #333;transform:scaleX(1.0276);">04:43</span><span class="t" style="left:2356.60px;top:879.00px;font-size:22.5px;color:#333;-webkit-text-stroke:0.36px #333;transform:scaleX(1.0393);">AM</span><span class="t" style="left:2398.61px;top:879.00px;font-size:22.5px;color:#333;-webkit-text-stroke:0.36px #333;transform:scaleX(0.9754);">end</span><span class="t" style="left:2443.20px;top:879.00px;font-size:22.5px;color:#333;-webkit-text-stroke:0.36px #333;transform:scaleX(1.0122);">time</span><span class="t" style="left:2493.41px;top:879.00px;font-size:22.5px;color:#333;-webkit-text-stroke:0.36px #333;transform:scaleX(1.1172);">01/08/2018</span><span class="t" style="left:2626.59px;top:879.00px;font-size:22.5px;color:#333;-webkit-text-stroke:0.36px #333;transform:scaleX(1.0075);">04:49</span><span class="t" style="left:2291.30px;top:907.00px;font-size:22.5px;color:#333;-webkit-text-stroke:0.36px #333;transform:scaleX(1.0517);">AM</span><span class="t" style="left:2334.40px;top:907.00px;font-size:22.5px;color:#333;-webkit-text-stroke:0.36px #333;transform:scaleX(1.0146);">time</span><span class="t" style="left:2384.96px;top:907.00px;font-size:22.5px;color:#333;-webkit-text-stroke:0.36px #333;transform:scaleX(0.9805);">spent</span><span class="t" style="left:2447.20px;top:907.00px;font-size:22.5px;color:#333;-webkit-text-stroke:0.36px #333;transform:scaleX(1.0010);">-</span><span class="t" style="left:2460.68px;top:907.00px;font-size:22.5px;color:#333;-webkit-text-stroke:0.36px #333;transform:scaleX(1.0294);">00.06</span><svg class="a" style="left:2691.8px;top:931.2px" width="13" height="13" viewBox="0 0 13 13" stroke="#333" stroke-width="1.100"><path d="M1 12L12 1M7 12l5-5"/></svg><div class="a" style="left:2276.9px;top:970.0px;width:20px;height:20px;border-radius:50%;box-shadow:inset 0 0 0 1.800px #4C82DA;background:#fff"></div><div class="a" style="left:2281.4px;top:974.5px;width:11px;height:11px;border-radius:50%;background:#4C82DA"></div><span class="t" style="left:2308.65px;top:971.00px;font-size:23px;color:#111;-webkit-text-stroke:0.37px #111;transform:scaleX(0.9758);">Billable</span><div class="a" style="left:2401.7000000000003px;top:970.0px;width:20px;height:20px;border-radius:50%;box-shadow:inset 0 0 0 1.700px #858585;background:#fff"></div><span class="t" style="left:2433.22px;top:971.00px;font-size:23px;color:#111;-webkit-text-stroke:0.37px #111;transform:scaleX(0.9908);">Non Billable</span><div class="a" style="left:2281.0px;top:1036.0px;width:125.9px;height:53.6px;background:#2C5494;border-radius:3px"></div><span class="t" style="left:2306.88px;top:1052.00px;font-size:23px;color:#fff;font-weight:bold;transform:scaleX(0.9423);">Update</span><div class="a" style="left:2418.8px;top:1035.7px;width:120.8px;height:53.5px;background:#fff;box-shadow:inset 0 0 0 1.500px #CDCDCD;border-radius:3px"></div><span class="t" style="left:2444.76px;top:1052.00px;font-size:23px;color:#111;-webkit-text-stroke:0.37px #111;transform:scaleX(0.9609);">Cancel</span></div></div></body></html>
